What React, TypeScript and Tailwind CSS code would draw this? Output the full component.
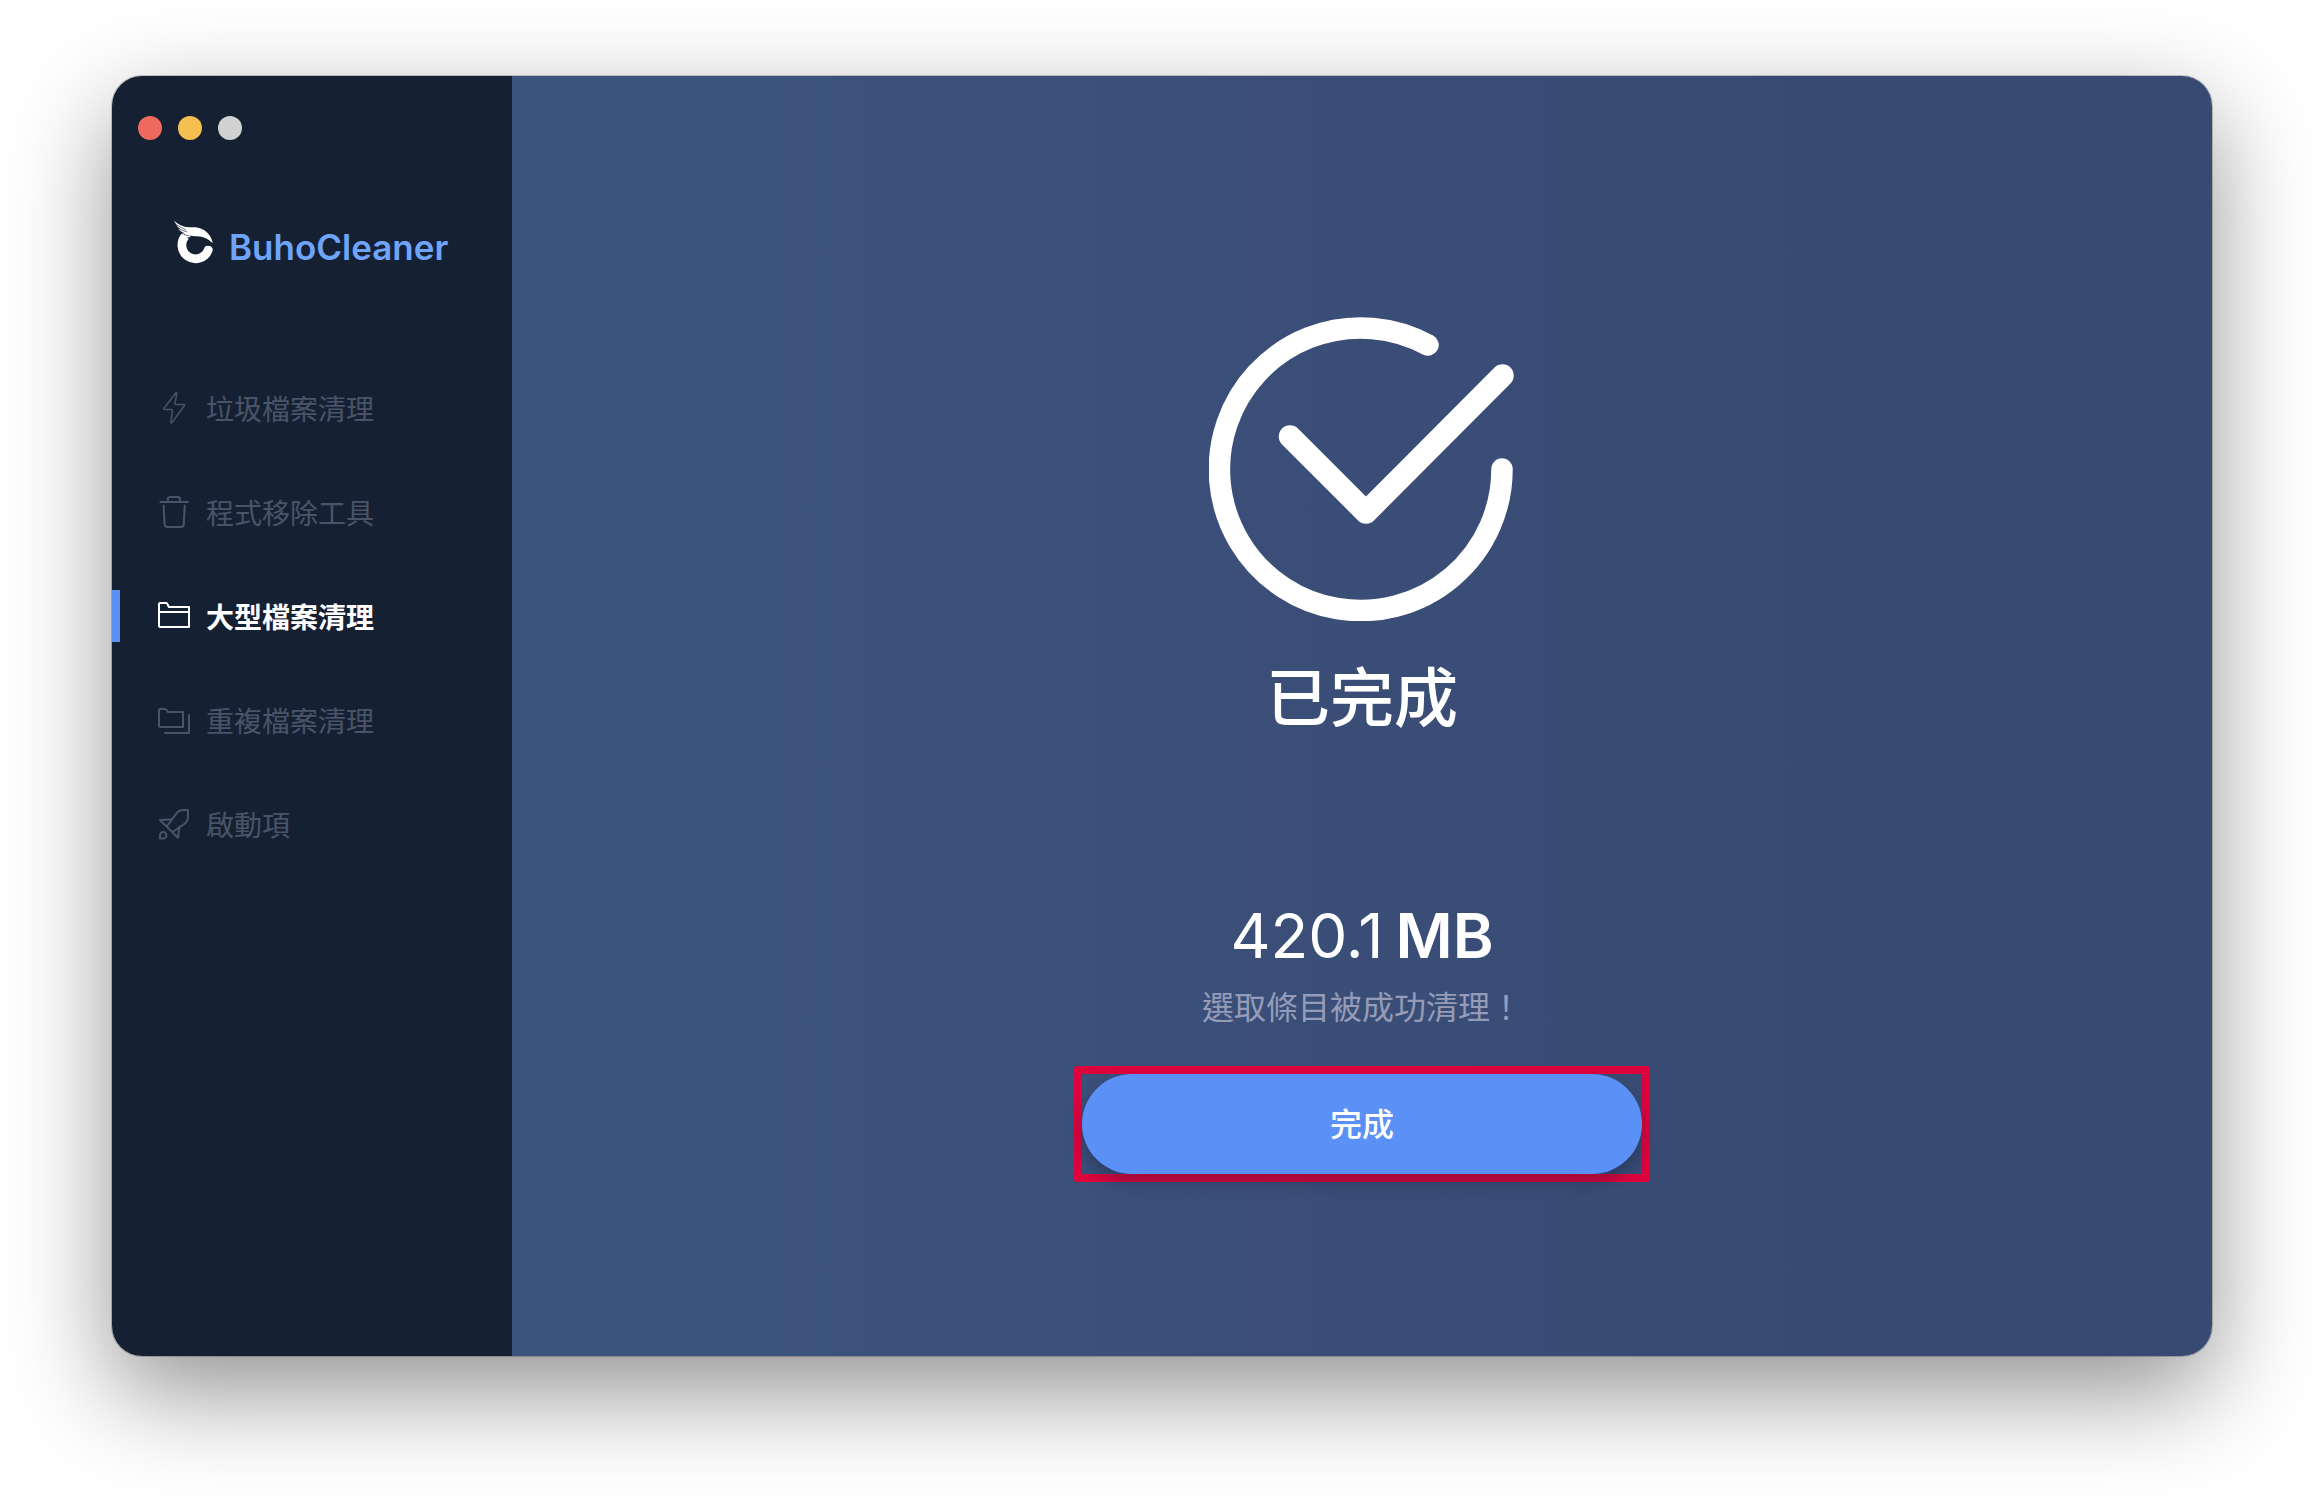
import React from 'react';

const BoltIcon = () => (
  <path
    d="M17.6 1.2 5.9 16.4c-.4.6-.2 1.1.5 1.1h7.2c.6 0 .8.3.8.8l-1.5 12c0 .9.6 1 1.1.3l12.3-16.9c.4-.6.2-1.1-.5-1.1h-8.1c-.6 0-.8-.3-.8-.8l1.9-10.2c.1-1-.7-1.2-1.2-.4z"
    strokeWidth="1.5"
  />
);

const TrashIcon = () => (
  <>
    <path d="M1.7 6h29M9.8 6V3.3C9.8 2 10.8 1 12 1h7.8c1.3 0 2.2 1 2.2 2.3V6" strokeLinecap="butt" />
    <path d="M5.6 9.5 6.5 28c.1 1.8 1.2 3 3 3h13.3c1.8 0 2.9-1.2 3-3l.9-18.5" />
  </>
);

const FolderIcon = () => (
  <path d="M1 26V4c0-.6.4-1 1-1h6.2c.4 0 .7.2.9.5L10.9 7H31v20H2c-.6 0-1-.4-1-1zM1 12h30" />
);

const FoldersIcon = () => (
  <>
    <path d="M1 22V6c0-.6.4-1 1-1h5.2c.4 0 .7.2.9.5L9.8 8H25v15H2c-.6 0-1-.4-1-1z" />
    <path d="M31 11v18H7" />
  </>
);

const RocketIcon = () => (
  <>
    <path d="M8.8 18.5 18.3 5.6C20.3 3 22 2 25 2h5v6.5c0 3-.8 5-3 7L14.5 24" />
    <path d="M13.2 11.5 2 12l18 17.7L21.3 19" />
    <path d="M2 27.2a3.2 3.2 0 1 1 3.2 3.2H2z" />
  </>
);

const menu = [
  { label: '垃圾檔案清理', icon: <BoltIcon /> },
  { label: '程式移除工具', icon: <TrashIcon /> },
  { label: '大型檔案清理', icon: <FolderIcon />, active: true },
  { label: '重複檔案清理', icon: <FoldersIcon /> },
  { label: '啟動項', icon: <RocketIcon /> },
];

const Sidebar: React.FC = () => (
  <aside className="w-100 shrink-0 bg-[#162033] pt-10">
    {/* Window controls */}
    <div className="flex gap-4 pl-[26px]">
      <button type="button" aria-label="關閉" className="size-6 rounded-full bg-[#ed6a5e]" />
      <button type="button" aria-label="縮到最小" className="size-6 rounded-full bg-[#f5bf4f]" />
      <button type="button" aria-label="縮放" className="size-6 rounded-full bg-[#d1d1d1]" />
    </div>

    {/* Brand */}
    <div className="mt-[79px] flex items-center gap-[13px] pl-15">
      <svg className="h-14 w-11" viewBox="0 1 44 56" fill="none" aria-hidden="true">
        <path d="M36.3 31.8A13.6 13.6 0 1 1 14.5 17" stroke="#fff" strokeWidth="8.8" strokeLinecap="round" />
        {/* Wing with its feathers */}
        <path d="M15 19.5c7-1.2 16-.6 26.5 8l-5 .3-4.5-.3c-3-2-13-4-17-8z" fill="#162033" />
        <path
          d="M2 2.5C6 6.5 11 9 17 9.3c3 .1 5-.3 8 .1 8.5 1.2 14.5 8 15.8 15.8C36.5 21 31.5 18.4 25 18.2c-5.5-.1-10.5-.2-14.500-3.200l2.600.3C9.800 14 7.500 12.800 6.200 10.700l2.800.8C6.300 9.700 4.600 7.800 3.800 5.800z"
          fill="#fff"
          stroke="#162033"
          strokeWidth="1.2"
          paintOrder="stroke"
        />
        <path d="M4 6.5 14 12M7 11l8 3" stroke="#162033" strokeWidth=".6" />
      </svg>
      <span className="font-['Inter',sans-serif] text-[35px] leading-10 font-semibold text-[#6ea5fb]">BuhoCleaner</span>
    </div>

    <nav className="mt-[107px] flex flex-col gap-13">
      {menu.map((item) => (
        <a
          key={item.label}
          href="#"
          className={
            item.active
              ? 'flex h-13 items-center gap-4 border-l-8 border-[#5b90f6] pl-[38px] text-[28px] font-bold text-white'
              : 'flex h-13 items-center gap-4 border-l-8 border-transparent pl-[38px] text-[28px] text-[#4a5468]'
          }
        >
          <svg
            className="size-8 shrink-0"
            viewBox="0 0 32 32"
            fill="none"
            stroke="currentColor"
            strokeWidth="2"
            strokeLinecap="round"
            strokeLinejoin="round"
            aria-hidden="true"
          >
            {item.icon}
          </svg>
          {item.label}
        </a>
      ))}
    </nav>
  </aside>
);

const Result: React.FC = () => (
  <main className="flex flex-1 flex-col items-center bg-linear-to-r from-[#3c537c] from-15% via-[#3a4e78] via-45% to-[#384a71] to-80% pt-[241px] text-white">
    <svg
      className="h-76 w-[306px]"
      viewBox="-1 0 306 304"
      fill="none"
      stroke="#fff"
      strokeWidth="21.5"
      strokeLinecap="round"
      strokeLinejoin="round"
      aria-hidden="true"
    >
      <path d="M218 28A141.3 141.3 0 1 0 292 152" />
      <path d="M80 119.5 156 195.5 292.5 58.5" strokeWidth="22.5" />
    </svg>
    <h1 className="mt-8 text-[64px] leading-20 font-medium">已完成</h1>

    <p className="mt-[163px] flex items-baseline gap-3 font-['Inter',sans-serif] text-[62px] leading-20">
      420.1<span className="font-semibold">MB</span>
    </p>
    <p className="mt-[5px] text-[32px] leading-12 text-[#959cb9]">選取條目被成功清理！</p>

    {/* Highlighted action */}
    <div className="mt-[37px] rounded-[3px] border-8 border-[#df033d]">
      <button
        type="button"
        className="block h-25 w-140 rounded-full bg-[#5b90f6] pb-1 text-[32px] font-medium shadow-[0_8px_16px_rgba(20,30,55,0.35)]"
      >
        完成
      </button>
    </div>
  </main>
);

export default function App() {
  return (
    <div className="flex min-h-screen bg-white px-28 pt-19 pb-37 font-['Noto_Sans_CJK_TC',sans-serif]" lang="zh-Hant">
      <div className="flex flex-1 overflow-hidden rounded-[30px] shadow-[0_0_0_1px_rgba(0,0,0,0.2),0_36px_100px_rgba(0,0,0,0.43)]">
        <Sidebar />
        <Result />
      </div>
    </div>
  );
}
